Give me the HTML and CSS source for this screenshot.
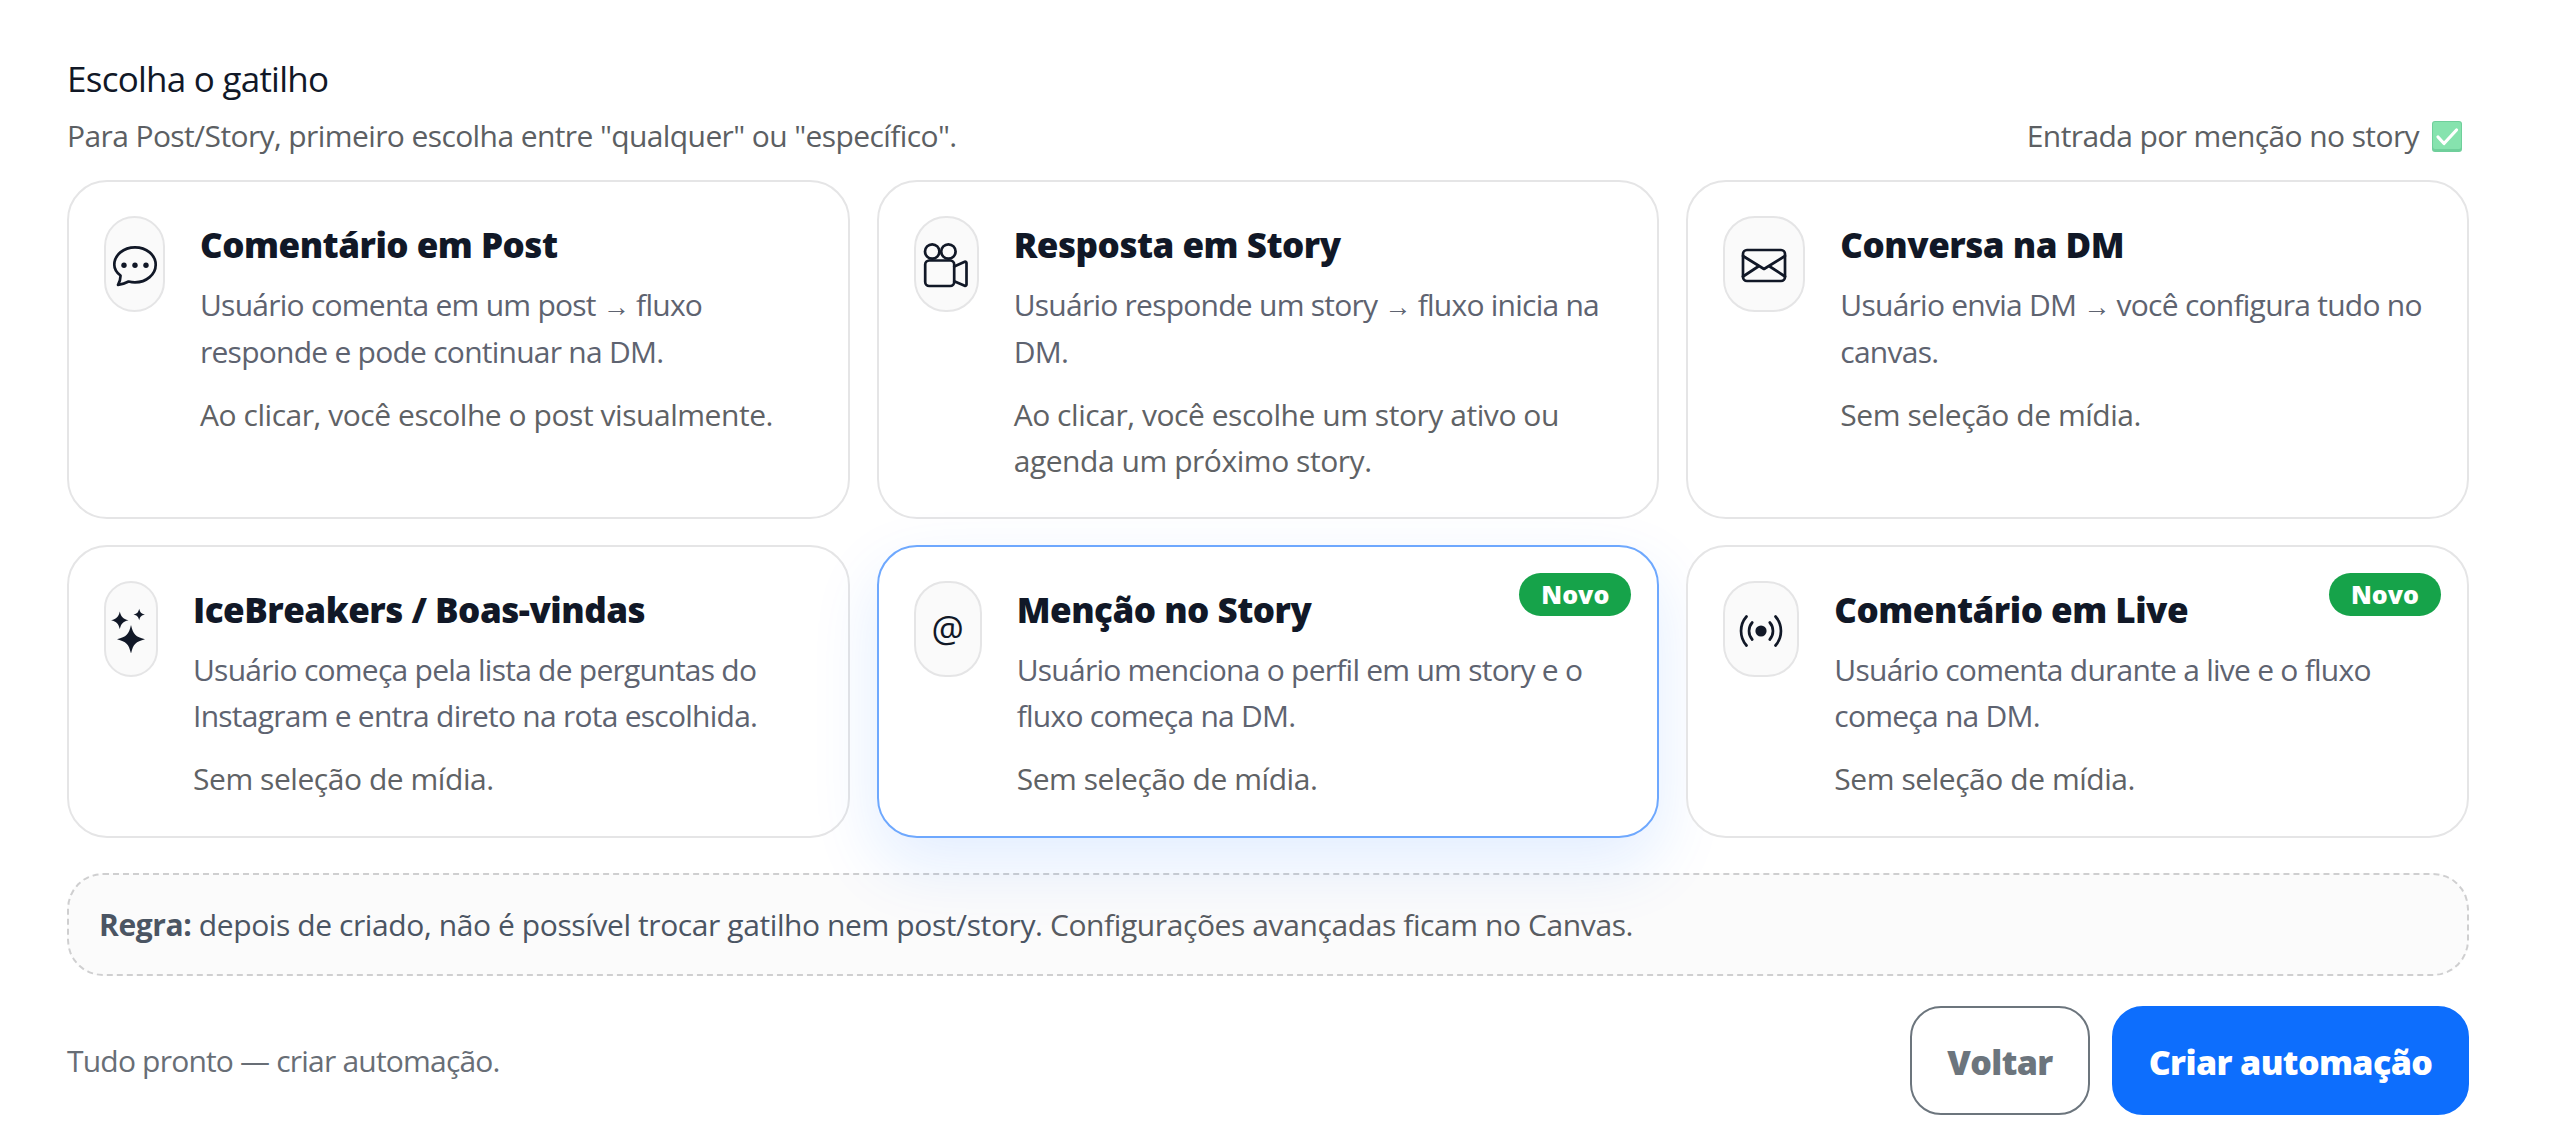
FILE: index.html
```html
<!DOCTYPE html>
<html lang="pt-BR">
<head>
  <meta charset="UTF-8">
  <meta name="viewport" content="width=device-width, initial-scale=1.0">
  <title>Escolha o gatilho</title>
  <link rel="stylesheet" href="styles.css">
</head>
<body>
  <div class="wizard">
    <h1 class="wizard-title">Escolha o gatilho</h1>
    <div class="wizard-sub">
      <span>Para Post/Story, primeiro escolha entre "qualquer" ou "específico".</span>
      <span class="wizard-entry">Entrada por menção no story
        <svg class="check" viewBox="0 0 30 31">
          <rect width="30" height="31" rx="3" fill="#6fcf9b"/>
          <rect x="1" y="1" width="28" height="27" rx="2" fill="#86e3ae"/>
          <path d="M6 16l6 6.5L24.500 9" fill="none" stroke="#fff" stroke-width="3.200" stroke-linecap="round" stroke-linejoin="round"/>
        </svg>
      </span>
    </div>

    <div class="trigger-grid">
      <div class="trigger-card">
        <div class="trigger-icon icon-comment">
          <svg viewBox="-24 -24 48 48">
            <path d="M-14.500 11.500C-18.500 8.500-20.700 4.500-20.700 0.700c0-9.600 9.200-17.400 20.700-17.400s20.700 7.800 20.700 17.400S11.500 18.300 0 18.300c-2.300 0-4.400-.3-6.400-.8-3.200 1.800-6.700 2.800-10.600 3.300 1.700-3 2.600-6 2.500-9.300z"/>
            <circle class="fill" cx="-11" cy="1.300" r="2.700"/>
            <circle class="fill" cx="0" cy="1.300" r="2.700"/>
            <circle class="fill" cx="11" cy="1.300" r="2.700"/>
          </svg>
        </div>
        <div class="trigger-body">
          <h2>Comentário em Post</h2>
          <p>Usuário comenta em um post <span class="arrow">→</span> fluxo responde e pode continuar na DM.</p>
          <p class="note">Ao clicar, você escolhe o post visualmente.</p>
        </div>
      </div>

      <div class="trigger-card">
        <div class="trigger-icon icon-camera">
          <svg viewBox="-24 -24 48 48">
            <circle cx="-13.800" cy="-12.500" r="7.200"/>
            <circle cx="2.400" cy="-12.500" r="7.200"/>
            <rect x="-20.800" y="-3.500" width="29" height="25.500" rx="4"/>
            <path d="M8.200 2.500l10.500-4.700c.9-.4 1.800.2 1.800 1.200v21.600c0 1-.9 1.600-1.800 1.200L8.200 17.200"/>
          </svg>
        </div>
        <div class="trigger-body">
          <h2>Resposta em Story</h2>
          <p>Usuário responde um story <span class="arrow">→</span> fluxo inicia na DM.</p>
          <p class="note">Ao clicar, você escolhe um story ativo ou agenda um próximo story.</p>
        </div>
      </div>

      <div class="trigger-card">
        <div class="trigger-icon icon-mail">
          <svg viewBox="-24 -24 48 48">
            <rect x="-21" y="-14" width="42" height="31" rx="4"/>
            <path d="M-21-8L0 5 21-8M-21 12.500L-5 2M21 12.500L5 2"/>
          </svg>
        </div>
        <div class="trigger-body">
          <h2>Conversa na DM</h2>
          <p>Usuário envia DM <span class="arrow">→</span> você configura tudo no canvas.</p>
          <p class="note">Sem seleção de mídia.</p>
        </div>
      </div>

      <div class="trigger-card">
        <div class="trigger-icon icon-stars">
          <svg viewBox="-24 -24 48 48">
            <path class="fill" d="M0-4c2.300 9.500 4.500 11.700 14 14.300-9.500 2.600-11.700 4.800-14 14.300-2.300-9.500-4.500-11.700-14-14.300C-4.500 7.700-2.300 5.500 0-4z"/>
            <path class="fill" d="M-11.200-17.500c1.400 5.500 3 7.200 8.700 8.800-5.700 1.600-7.300 3.300-8.700 8.800-1.400-5.500-3-7.200-8.700-8.800 5.700-1.600 7.300-3.300 8.700-8.800z"/>
            <path class="fill" d="M8.200-20.300c.9 3.700 2 4.800 5.700 5.800-3.700 1-4.800 2.100-5.700 5.800-.9-3.700-2-4.800-5.700-5.800 3.700-1 4.800-2.100 5.700-5.800z"/>
          </svg>
        </div>
        <div class="trigger-body">
          <h2>IceBreakers / Boas-vindas</h2>
          <p>Usuário começa pela lista de perguntas do Instagram e entra direto na rota escolhida.</p>
          <p class="note">Sem seleção de mídia.</p>
        </div>
      </div>

      <div class="trigger-card selected">
        <span class="badge-new">Novo</span>
        <div class="trigger-icon icon-at">@</div>
        <div class="trigger-body">
          <h2>Menção no Story</h2>
          <p>Usuário menciona o perfil em um story e o fluxo começa na DM.</p>
          <p class="note">Sem seleção de mídia.</p>
        </div>
      </div>

      <div class="trigger-card">
        <span class="badge-new">Novo</span>
        <div class="trigger-icon icon-live">
          <svg viewBox="-24 -24 48 48">
            <circle class="fill" cx="0" cy="2" r="5.600"/>
            <path d="M-8.800-6.500a13 13 0 0 0 0 17M8.800-6.500a13 13 0 0 1 0 17M-14.500-12.500a22 22 0 0 0 0 29M14.500-12.500a22 22 0 0 1 0 29"/>
          </svg>
        </div>
        <div class="trigger-body">
          <h2>Comentário em Live</h2>
          <p>Usuário comenta durante a live e o fluxo começa na DM.</p>
          <p class="note">Sem seleção de mídia.</p>
        </div>
      </div>
    </div>

    <div class="rule-box">
      <strong>Regra:</strong> depois de criado, não é possível trocar gatilho nem post/story. <span>Configurações avançadas ficam no Canvas.</span>
    </div>

    <div class="wizard-footer">
      <span class="status">Tudo pronto — criar automação.</span>
      <button class="btn btn-back" type="button">Voltar</button>
      <button class="btn btn-create" type="button">Criar automação</button>
    </div>
  </div>
</body>
</html>
```
FILE: styles.css
```css
* {
  box-sizing: border-box;
}

body {
  margin: 0;
  background-color: #fff;
  font-family: "Open Sans", "Noto Sans", sans-serif;
  font-size: 30px;
  line-height: 45.5px;
  letter-spacing: -0.6px;
  color: #111827;
}

.wizard {
  padding: 52px 91px 32px 67px;
}

.wizard-title {
  margin: 0 0 5px;
  font-size: 35px;
  font-weight: 400;
  line-height: 54px;
  letter-spacing: -0.75px;
}

.wizard-sub {
  display: flex;
  justify-content: space-between;
  margin-bottom: 19px;
  padding-right: 7px;
  line-height: 50px;
  color: #5c5f63;
}

.wizard-entry {
  display: flex;
  align-items: center;
  gap: 13px;
}

.check {
  width: 30px;
  height: 31px;
}

/* Trigger cards */
.trigger-grid {
  display: grid;
  grid-template-columns: repeat(3, 1fr);
  gap: 26px 27px;
}

.trigger-card {
  position: relative;
  display: flex;
  align-items: flex-start;
  gap: 35px;
  padding: 34px 34px 34px 35px;
  background-color: #fff;
  border: 2px solid #e5e5e6;
  border-radius: 40px;
}

.trigger-card.selected {
  border-color: #6ea8fe;
  box-shadow: 0 27px 68px rgba(13, 110, 253, 0.12);
}

.trigger-icon {
  display: flex;
  align-items: center;
  justify-content: center;
  flex: none;
  height: 96px;
  background-color: #fafafa;
  border: 2px solid #e5e5e6;
  border-radius: 32px;
}

.trigger-icon svg {
  flex: none;
  width: 48px;
  height: 48px;
  fill: none;
  stroke: #111827;
  stroke-width: 2.7;
  stroke-linecap: round;
  stroke-linejoin: round;
}

.trigger-icon .fill {
  fill: #111827;
  stroke: none;
}

.icon-comment {
  width: 61px;
}

.icon-camera {
  width: 65px;
}

.icon-mail {
  width: 82px;
}

.icon-stars {
  width: 54px;
}

.icon-at {
  width: 68px;
  font-size: 36px;
  letter-spacing: 0;
}

.icon-live {
  width: 76px;
}

.trigger-body {
  padding-top: 8px;
}

.trigger-body h2 {
  margin: 0 0 16px;
  font-size: 35px;
  font-weight: 800;
  line-height: 42px;
  letter-spacing: -0.5px;
}

.trigger-body p {
  margin: 0;
  letter-spacing: -0.75px;
  color: #5e6370;
}

.trigger-body .note {
  margin-top: 18px;
  letter-spacing: -0.45px;
  color: #5f6265;
}

.arrow {
  font-size: 27px;
}

.badge-new {
  position: absolute;
  top: 26px;
  right: 26px;
  width: 112px;
  height: 43px;
  border-radius: 22px;
  background-color: #16a34a;
  color: #fff;
  font-size: 25px;
  font-weight: 800;
  line-height: 43px;
  letter-spacing: 0;
  text-align: center;
}

/* Rule notice */
.rule-box {
  margin-top: 35px;
  padding: 27px 30px;
  border: 2px dashed #cfcfd0;
  border-radius: 36px;
  background-color: rgba(0, 0, 0, 0.016);
  color: #4b5563;
  letter-spacing: -0.4px;
}

.rule-box strong {
  letter-spacing: -0.4px;
}

.rule-box span {
  color: #585c61;
}

/* Footer */
.wizard-footer {
  display: flex;
  align-items: center;
  gap: 22px;
  margin-top: 30px;
}

.status {
  margin-right: auto;
  letter-spacing: -0.8px;
  color: #686e76;
}

.btn {
  height: 109px;
  padding: 2px 0 0;
  border: 2px solid #0d6efd;
  border-radius: 31px;
  font-family: inherit;
  font-size: 34px;
  font-weight: 800;
  letter-spacing: -0.6px;
}

.btn-back {
  width: 180px;
  border-color: #6c757d;
  background-color: #fff;
  color: #6c757d;
}

.btn-create {
  width: 357px;
  background-color: #0d6efd;
  color: #fff;
}
```
